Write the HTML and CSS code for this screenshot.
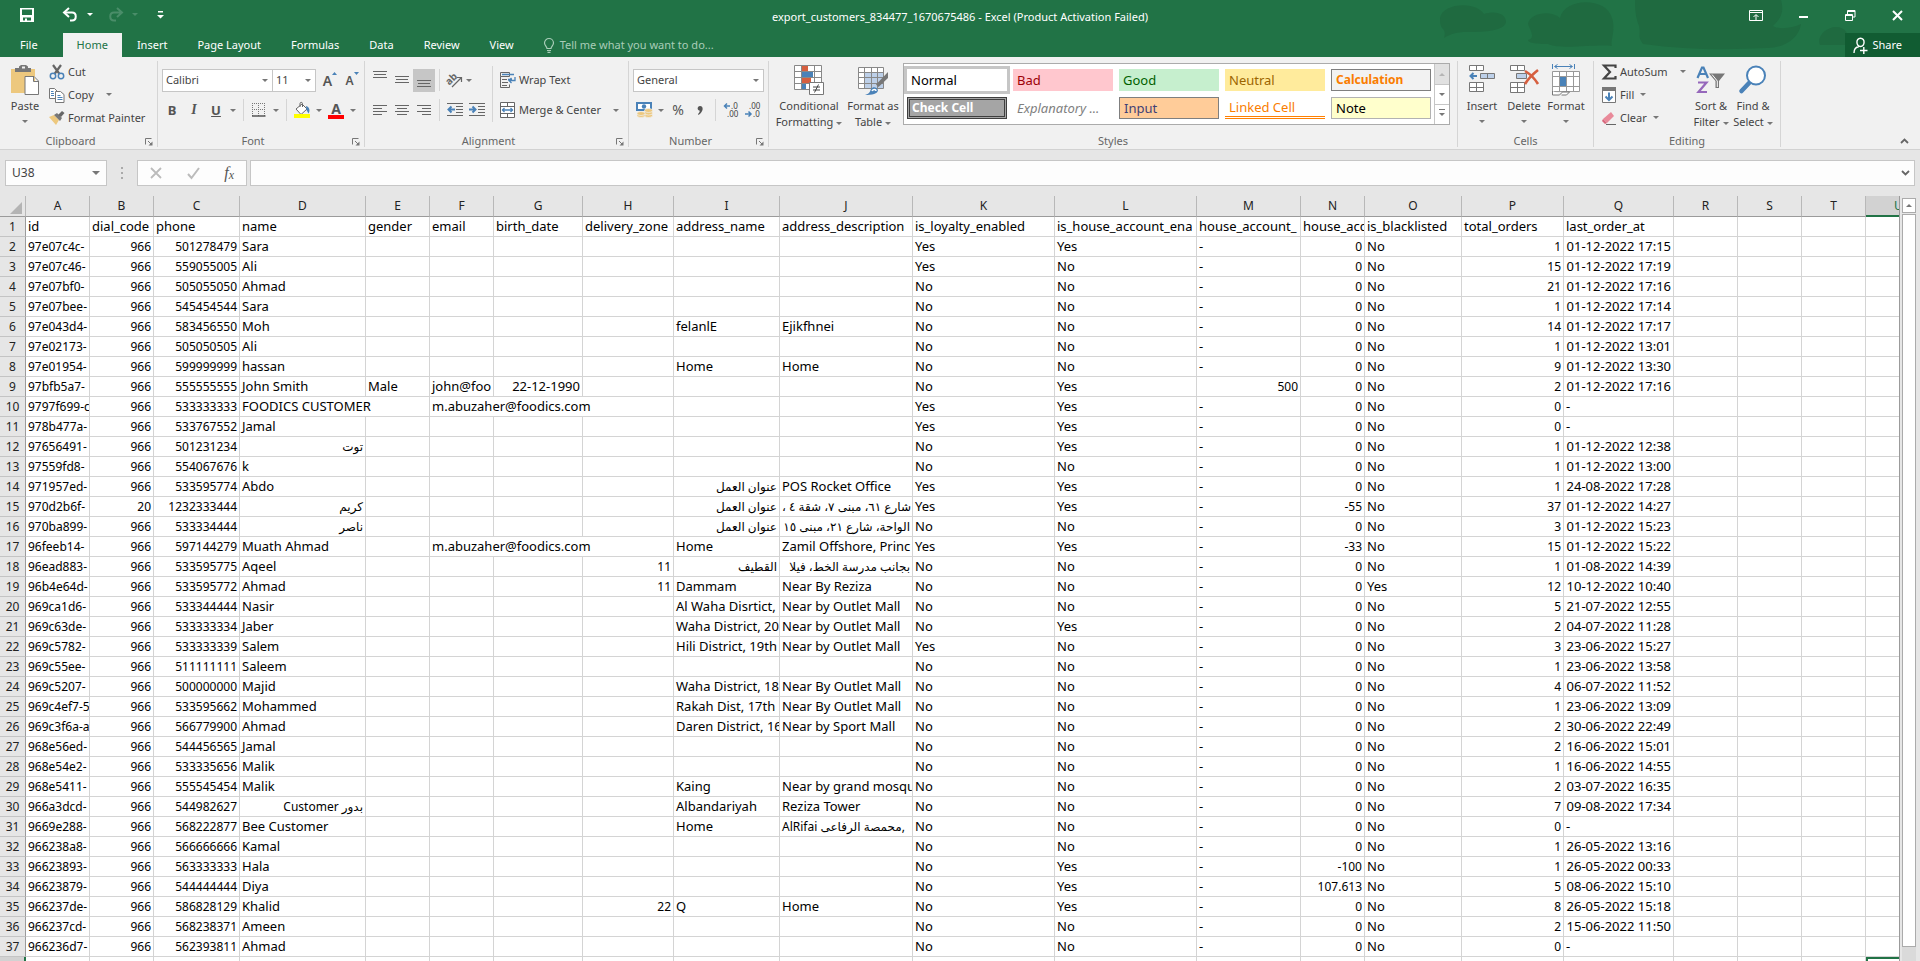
FILE: index.html
```html
<!DOCTYPE html>
<html lang="en">
<head>
<meta charset="utf-8">
<title>export_customers_834477_1670675486 - Excel</title>
<link rel="stylesheet" href="styles.css">
</head>
<body>
<header class="top">
  <svg class="clouds" width="480" height="57" viewBox="0 0 480 57" aria-hidden="true">
    <g fill="#1f6a40"><path d="M0 18C2 4 34 0 44 14c12-4 22 0 22 8-2 10-26 10-40 10-8 0-16 2-22 6 2-6 0-8-2-10-2-3-2-6-2-10z"/><path d="M88 24c2-12 24-14 32-6C124-2 166-4 172 18c4 12-2 24 0 28-16-2-52 4-64-2-16 0-20-2-20-4 8-2 2-10 0-16z"/><path d="M195 0h146c4 14-2 20-8 26 6 4 20 2 28-2-2 14-16 24-34 24-40 2-80 2-124-4-6-8-2-10-4-18-4-10-4-20-4-26z"/><path d="M380 45c-4-10 8-18 16-18 10 0 14 8 12 18z"/></g>
  </svg>
  <div class="titlebar">
    <div class="quick">
      <button class="plain save" aria-label="Save"><svg width="14" height="14" viewBox="0 0 14 14"><path fill="#fff" fill-rule="evenodd" d="M0 0h14v14H0zM2 1.500v5.500h10V1.500zM3 9.500v3h2v-2h2v2h4v-3z"/></svg></button>
      <button class="plain" aria-label="Undo"><svg width="15" height="14" viewBox="0 0 15 14"><path d="M2 4.500h7c5 0 5 8 0 8H7" fill="none" stroke="#fff" stroke-width="2"/><path d="M6 0L1 4.500 6 9" fill="none" stroke="#fff" stroke-width="2"/></svg></button>
      <span class="caret light"></span>
      <button class="plain redo" aria-label="Redo"><svg width="15" height="14" viewBox="0 0 15 14"><path d="M13 4.500H6c-5 0-5 8 0 8h2M9 0l5 4.500L9 9" fill="none" stroke="#4a8d69" stroke-width="2"/></svg></button>
      <span class="caret dim"></span>
      <button class="plain custom" aria-label="Customize toolbar"><svg width="7" height="8" viewBox="0 0 7 8"><path fill="#fff" d="M1 0h5v1.500H1zM0 4h7L3.500 7.500z"/></svg></button>
    </div>
    <h1 class="doc">export_customers_834477_1670675486 - Excel (Product Activation Failed)</h1>
    <div class="winbtns">
      <button class="plain" aria-label="Ribbon display options"><svg width="14" height="12" viewBox="0 0 14 12"><path d="M.5.500h13v10H.5zM.5 2.500h13M7 10V5M4.500 7L7 4.500 9.500 7" fill="none" stroke="#fff"/></svg></button>
      <button class="plain" aria-label="Minimize"><svg width="10" height="12" viewBox="0 0 10 12"><path fill="#fff" d="M0 6h9v2H0z"/></svg></button>
      <button class="plain" aria-label="Restore"><svg width="11" height="12" viewBox="0 0 11 12"><path d="M.5 4.500h7v6h-7zM.5 5.500h7M2.500 4V.500h7.500v6.500H8M2.500 1.500H10" fill="none" stroke="#fff"/></svg></button>
      <button class="plain" aria-label="Close"><svg width="11" height="11" viewBox="0 0 11 11"><path d="M1 1l9 9M10 1l-9 9" stroke="#fff" stroke-width="2"/></svg></button>
    </div>
  </div>
  <nav class="tabs">
    <button class="tab file">File</button><button class="tab on">Home</button><button class="tab">Insert</button><button class="tab">Page Layout</button><button class="tab">Formulas</button><button class="tab">Data</button><button class="tab">Review</button><button class="tab">View</button>
    <button class="tab tell"><svg width="10" height="15" viewBox="0 0 10 15"><path d="M3 10.500c0-2-2.500-3-2.500-5.500a4.500 4.500 0 0 1 9 0c0 2.500-2.500 3.500-2.500 5.500zM3 12.500h4M3.500 14.300h3" fill="none" stroke="#a9cdb8" stroke-width="1.200"/></svg>Tell me what you want to do...</button>
    <button class="share"><svg width="15" height="17" viewBox="0 0 15 17"><path d="M1 16c0-4 2-6 5-6.500M7.500 1.200c5 0 4.500 8.300 0 8.300s-5-8.300 0-8.300zM7 13.500h7.500M10.800 10v7" fill="none" stroke="#fff" stroke-width="1.400"/></svg>Share</button>
  </nav>
</header>

<section class="ribbon" aria-label="Home ribbon">
  <div class="group clip">
    <div class="body">
      <button class="big paste"><svg width="30" height="30" viewBox="0 0 30 30"><path fill="#edc87e" d="M1 4h24v24H1z"/><path fill="#777" d="M5 3h4V1.500L11 0h5l2 1.500V3h3v4H5z"/><path fill="#f1f1f1" d="M12 1.500h3v2h-3z"/><path d="M15 11.500h9l4.500 4.500v13.500H15zM23.500 12v4.500h5" fill="#fff" stroke="#777"/></svg><span>Paste</span><i class="caret"></i></button>
      <div class="stack">
        <button class="small"><svg width="16" height="16" viewBox="0 0 16 16"><path d="M4 1l6.500 9M12 1L5.500 10" stroke="#666" stroke-width="2.200"/><g fill="none" stroke="#4a82b8" stroke-width="1.500"><circle cx="4" cy="12" r="2.700"/><circle cx="12" cy="12" r="2.700"/></g></svg>Cut</button>
        <button class="small"><svg width="16" height="16" viewBox="0 0 16 16"><path d="M.5 1.500h5l3 3v7h-8z" fill="#fff" stroke="#777"/><path d="M6.500 4.500h5l3.500 3v8H6.500z" fill="#fff" stroke="#777"/><path d="M2 4.500h2.500M2 6.500h3M2 8.500h3M8.500 8.500h3M8.500 10.500h5M8.500 12.500h5" stroke="#4a82b8"/></svg>Copy<i class="caret far"></i></button>
        <button class="small"><svg width="16" height="16" viewBox="0 0 16 16"><path d="M0 7l5-2 5 5-3 5z" fill="#edc87e"/><path d="M5 5l3-2 5 5-2 3z" fill="#777"/><path d="M9 5l4-4 2.500 2L12 7z" fill="#666"/></svg>Format Painter</button>
      </div>
    </div>
    <div class="cap"><span>Clipboard</span><button class="plain launch" aria-label="Clipboard settings"><svg width="8" height="8" viewBox="0 0 8 8"><path d="M.5 6.500v-6h6M3 3l4 4" fill="none" stroke="#777"/><path fill="#777" d="M7.500 3.500v4h-4z"/></svg></button></div>
  </div>

  <div class="group font">
    <div class="body rows">
      <div class="row gap">
        <span class="pick face"><select aria-label="Font"><option>Calibri</option></select><i class="caret"></i></span><span class="pick size"><select aria-label="Font size"><option>11</option></select><i class="caret"></i></span>
        <button class="tool grow" aria-label="Increase font size"><b class="a1">A</b><svg width="5" height="3" viewBox="0 0 5 3"><path fill="#4a82b8" d="M0 3h5L2.500 0z"/></svg></button>
        <button class="tool grow" aria-label="Decrease font size"><b class="a2">A</b><svg width="5" height="3" viewBox="0 0 5 3"><path fill="#4a82b8" d="M0 0h5L2.500 3z"/></svg></button>
      </div>
      <div class="row edge">
        <button class="tool"><b>B</b></button><button class="tool"><em>I</em></button><button class="tool"><u>U</u></button><i class="caret slot"></i>
        <hr class="sep">
        <button class="tool" aria-label="Borders"><svg width="14" height="14" viewBox="0 0 14 14"><path d="M.5 0v13M6.500 0v13M12.500 0v13M0 .500h13M0 6.500h13" stroke="#777" stroke-dasharray="1 1"/><path d="M0 13h13.500" stroke="#555" stroke-width="1.500"/></svg></button><i class="caret slot"></i>
        <hr class="sep">
        <button class="tool" aria-label="Fill color"><svg width="16" height="16" viewBox="0 0 16 16"><path d="M2 7l6-5 5 5-6 5.500z" fill="#fff" stroke="#666"/><path d="M6 5V1.500C6 0 8.500 0 8.500 1.500V5" fill="none" stroke="#666"/><path fill="#4a82b8" d="M12 4c4 1 4 5 2.500 7.500L12.500 8z"/><path fill="#ff0" d="M0 12h16v4H0z"/></svg></button><i class="caret slot"></i>
        <button class="tool inkbtn" aria-label="Font color"><b>A</b></button><i class="caret slot"></i>
      </div>
    </div>
    <div class="cap"><span>Font</span><button class="plain launch" aria-label="Font settings"><svg width="8" height="8" viewBox="0 0 8 8"><path d="M.5 6.500v-6h6M3 3l4 4" fill="none" stroke="#777"/><path fill="#777" d="M7.500 3.500v4h-4z"/></svg></button></div>
  </div>

  <div class="group align">
    <div class="body">
      <div class="rows">
        <div class="row">
          <button class="tool lift" aria-label="Top align"><svg width="14" height="16" viewBox="0 0 14 16"><path d="M0 1.500h14M1 4.500h12M0 7.500h14" stroke="#666"/></svg></button><button class="tool" aria-label="Middle align"><svg width="14" height="16" viewBox="0 0 14 16"><path d="M0 4.500h14M1 7.500h12M0 10.500h14" stroke="#666"/></svg></button><button class="tool pressed" aria-label="Bottom align"><svg width="14" height="16" viewBox="0 0 14 16"><path d="M0 8.500h14M1 11.500h12M0 14.500h14" stroke="#666"/></svg></button>
          <hr class="sep">
          <button class="tool" aria-label="Orientation"><svg width="18" height="16" viewBox="0 0 18 16"><text x="0" y="10" font-size="10" font-weight="bold" fill="#666" transform="rotate(-45 6 8)">ab</text><path d="M6 15L15 6M11 5.500h4.500V10" fill="none" stroke="#666" stroke-width="1.200"/></svg></button><i class="caret slot near"></i>
        </div>
        <div class="row">
          <button class="tool" aria-label="Align left"><svg width="14" height="12" viewBox="0 0 14 12"><path d="M0 1.500h14M0 4.500h9M0 7.500h14M0 10.500h9" stroke="#666"/></svg></button><button class="tool" aria-label="Center"><svg width="14" height="12" viewBox="0 0 14 12"><path d="M0 1.500h14M2 4.500h10M0 7.500h14M2 10.500h10" stroke="#666"/></svg></button><button class="tool" aria-label="Align right"><svg width="14" height="12" viewBox="0 0 14 12"><path d="M0 1.500h14M5 4.500h9M0 7.500h14M5 10.500h9" stroke="#666"/></svg></button>
          <hr class="sep">
          <button class="tool" aria-label="Decrease indent"><svg width="16" height="14" viewBox="0 0 16 14"><path d="M0 .500h16M9 3.500h7M9 6.500h7M9 9.500h7M0 12.500h16" stroke="#666"/><path d="M8 6.500H2M4.500 3.500l-3 3 3 3" fill="none" stroke="#4a82b8" stroke-width="2"/></svg></button><button class="tool" aria-label="Increase indent"><svg width="16" height="14" viewBox="0 0 16 14"><path d="M0 .500h16M9 3.500h7M9 6.500h7M9 9.500h7M0 12.500h16" stroke="#666"/><path d="M0 6.500h6M3.500 3.500l3 3-3 3" fill="none" stroke="#4a82b8" stroke-width="2"/></svg></button>
        </div>
      </div>
      <hr class="sep tall">
      <div class="rows">
        <div class="row"><button class="small"><svg width="16" height="16" viewBox="0 0 16 16"><path d="M.5.500h9v4h-9zM.5 4.500v11h9v-3" fill="none" stroke="#666"/><path d="M2 7.500h5M2 10.500h6M2 13.500h5" stroke="#666"/><path d="M2 2.500h12M8 7.500h4M15 5v3.500H9M11.500 6L9 8.500l2.500 2.500" fill="none" stroke="#4a82b8" stroke-width="1.300"/></svg>Wrap Text</button></div>
        <div class="row"><button class="small"><svg width="16" height="16" viewBox="0 0 16 16"><path d="M.5.500h14v15H.5zM.5 4.500h14M.5 11.500h14M7.500 0v4.500M7.500 11.500V16" fill="#fff" stroke="#666"/><path d="M2 8h11M4.500 6L2.500 8l2 2M10.500 6l2 2-2 2" fill="none" stroke="#4a82b8" stroke-width="1.300"/></svg>Merge &amp; Center<i class="caret far"></i></button></div>
      </div>
    </div>
    <div class="cap"><span>Alignment</span><button class="plain launch" aria-label="Alignment settings"><svg width="8" height="8" viewBox="0 0 8 8"><path d="M.5 6.500v-6h6M3 3l4 4" fill="none" stroke="#777"/><path fill="#777" d="M7.500 3.500v4h-4z"/></svg></button></div>
  </div>

  <div class="group number">
    <div class="body rows">
      <div class="row"><span class="pick fmt"><select aria-label="Number format"><option>General</option></select><i class="caret"></i></span></div>
      <div class="row">
        <button class="tool" aria-label="Accounting format"><svg width="17" height="16" viewBox="0 0 17 16"><path fill="#4a82b8" d="M0 0h16v9H0z"/><path fill="#fff" d="M2 2h12v5H2z"/><circle cx="8" cy="4.500" r="2.200" fill="#4a82b8"/><g fill="#edc87e" stroke="#f1f1f1" stroke-width=".7"><ellipse cx="12.500" cy="13.500" rx="4" ry="2"/><ellipse cx="12.500" cy="11" rx="4" ry="2"/><ellipse cx="12.500" cy="8.500" rx="4" ry="2"/><ellipse cx="5" cy="13.500" rx="4" ry="2"/><ellipse cx="5" cy="11.500" rx="4" ry="2"/></g></svg></button><i class="caret slot"></i>
        <button class="tool pct">%</button><button class="tool" aria-label="Comma style"><svg width="6" height="9" viewBox="0 0 6 9"><path d="M3 0c4 0 3.500 6-1.500 9L1 8c1.500-1.500 2-2.500 1.500-3.500C0 4 0 .500 3 0z" fill="#555"/></svg></button>
        <hr class="sep">
        <button class="tool" aria-label="Increase decimal"><svg width="16" height="16" viewBox="0 0 16 16"><g font-size="8" fill="#444"><text x="8" y="7">.0</text><text x="4" y="15">.00</text></g><path d="M7 4H2M4 1.500L1.500 4 4 6.500" fill="none" stroke="#4a82b8" stroke-width="1.500"/></svg></button><button class="tool" aria-label="Decrease decimal"><svg width="16" height="16" viewBox="0 0 16 16"><g font-size="8" fill="#444"><text x="4" y="7">.00</text><text x="8" y="15">.0</text></g><path d="M0 12h6M3.500 9.500L6 12l-2.500 2.500" fill="none" stroke="#4a82b8" stroke-width="1.500"/></svg></button>
      </div>
    </div>
    <div class="cap"><span>Number</span><button class="plain launch" aria-label="Number settings"><svg width="8" height="8" viewBox="0 0 8 8"><path d="M.5 6.500v-6h6M3 3l4 4" fill="none" stroke="#777"/><path fill="#777" d="M7.500 3.500v4h-4z"/></svg></button></div>
  </div>

  <div class="group styles">
    <div class="body">
      <button class="big cf"><svg width="30" height="30" viewBox="0 0 30 30"><path d="M.5.500h27v24H.5z" fill="#fff"/><path fill="#d65f3f" d="M8 1h6v5H8zM8 13h9v5H8z"/><path fill="#4a82b8" d="M8 7h11v5H8zM8 19h4v5H8z"/><path d="M.5.500h27v24H.5zM.5 6.500h27M.5 12.500h27M.5 18.500h27M7.500.500v24M20.500.500v24" fill="none" stroke="#888"/><path d="M15.500 17.500h14v12h-14z" fill="#fff" stroke="#777"/><path d="M19 22h7M19 25h7M24.500 19.500l-4 8" stroke="#444"/></svg><span>Conditional</span><span>Formatting<i class="caret in"></i></span></button>
      <button class="big fat"><svg width="30" height="30" viewBox="0 0 30 30"><path fill="#fff" d="M.5 2.500h25v21H.5z"/><path fill="#bdd0e9" d="M7 8h18v15H7z"/><path d="M.5 2.500h25v21H.5zM.5 7.500h25M.5 12.500h25M.5 18.500h25M6.500 2.500v21M13.500 2.500v21M19.500 2.500v21" fill="none" stroke="#888"/><path d="M30 7v6L20.500 22 18 19.500z" fill="#777"/><path d="M7 30c4-1 5-3 6-6 2-3 6-2 7 1 0 4-6 5-13 5z" fill="#4a82b8"/><path d="M14 26c1-2 4-2 4 0" fill="none" stroke="#fff" stroke-width="1.500"/></svg><span>Format as</span><span>Table<i class="caret in"></i></span></button>
      <div class="gallery">
        <div class="swatches">
          <button class="sw normal">Normal</button><button class="sw bad">Bad</button><button class="sw good">Good</button><button class="sw neutral">Neutral</button><button class="sw calc">Calculation</button>
          <button class="sw check">Check Cell</button><button class="sw expl">Explanatory ...</button><button class="sw inp">Input</button><button class="sw link">Linked Cell</button><button class="sw note">Note</button>
        </div>
        <div class="scroll"><button class="off" aria-label="Previous styles"><i class="caret up"></i></button><button aria-label="Next styles"><i class="caret"></i></button><button aria-label="All styles"><i class="caret more"></i></button></div>
      </div>
    </div>
    <div class="cap"><span>Styles</span></div>
  </div>

  <div class="group cells">
    <div class="body">
      <button class="big"><svg width="28" height="30" viewBox="0 0 28 30"><path d="M1.500.500h14v5h-14zM8.500.500v5M1.500 17.500h14v9h-14zM8.500 17.500v9M1.500 22.500h14" fill="#fff" stroke="#777"/><path d="M12.500 8.500h14v5h-14zM19.500 8.500v5" fill="#bdd0e9" stroke="#777"/><path d="M9 11H3M5.500 8L2.500 11l3 3" fill="none" stroke="#4a82b8" stroke-width="2"/></svg><span>Insert</span><i class="caret"></i></button>
      <button class="big"><svg width="30" height="30" viewBox="0 0 30 30"><path d="M1.500.500h14v5h-14zM8.500.500v5M1.500 17.500h14v10h-14zM8.500 17.500v10M1.500 22.500h14" fill="#fff" stroke="#777"/><path d="M7.500 8.500h10v5h-10z" fill="#bdd0e9" stroke="#777"/><path d="M16 6c5 3 10 8 13 13M29 5c-5 4-10 9-13 14" fill="none" stroke="#d65f3f" stroke-width="2.600"/></svg><span>Delete</span><i class="caret"></i></button>
      <button class="big"><svg width="28" height="32" viewBox="0 0 28 32" class="tallicon"><path d="M.5 0v5M22.500 0v5M3 2.500h17M5.500.500l-3 2 3 2M17.500.500l3 2-3 2" fill="none" stroke="#4a82b8"/><path d="M.5 7.500h27v20H.5z" fill="#fff"/><path d="M.5 7.500h27v20H.5zM7.500 7v20M14.500 7v20M21.500 7v20M.5 12.500h27M.5 22.500h27" fill="none" stroke="#999"/><path fill="#4a82b8" d="M8 13h6v9H8z"/><path d="M.5 27v4h7l3-3h7l-3 3h-5" fill="#fff" stroke="#777"/></svg><span>Format</span><i class="caret"></i></button>
    </div>
    <div class="cap"><span>Cells</span></div>
  </div>

  <div class="group editing">
    <div class="body">
      <div class="stack">
        <button class="small"><svg width="15" height="16" viewBox="0 0 15 16"><path d="M13.500 4V1.500H2L8 8l-6 6.500h11.500V12" fill="none" stroke="#444" stroke-width="2.200"/></svg>AutoSum<i class="caret far"></i></button>
        <button class="small"><svg width="15" height="16" viewBox="0 0 15 16"><path d="M.5.500h13v15H.5z" fill="#fff" stroke="#777"/><path fill="#777" d="M0 0h14v4H0z"/><path d="M7 5.500V13M3.500 9.500L7 13l3.500-3.500" fill="none" stroke="#4a82b8" stroke-width="2"/></svg>Fill<i class="caret in"></i></button>
        <button class="small"><svg width="15" height="16" viewBox="0 0 15 16"><path d="M1 9l8-7 3 4-7 7z" fill="#e98a9a"/><path d="M1 9l4 4-2 1-3-3z" fill="#d9677c"/><path d="M4 14.500h10" stroke="#666"/></svg>Clear<i class="caret in"></i></button>
      </div>
      <button class="big"><svg width="30" height="30" viewBox="0 0 30 30"><path d="M1.500 13L6 2.500h1.500L12 13M3.500 9h6.500" fill="none" stroke="#4a82b8" stroke-width="2.200"/><path d="M2 17.500h8.500L2.500 27H11" fill="none" stroke="#9668bb" stroke-width="2.200"/><path d="M13 8.500h16L23 16v7h-3.500v-7z" fill="#777"/><path d="M16 9.500L21.300 16v6" fill="none" stroke="#fff"/></svg><span>Sort &amp;</span><span>Filter<i class="caret in"></i></span></button>
      <button class="big"><svg width="28" height="30" viewBox="0 0 28 30"><path d="M11 17L2.500 26" stroke="#4a82b8" stroke-width="4.500" stroke-linecap="round"/><circle cx="17" cy="10.500" r="9" fill="#fff" stroke="#4a82b8" stroke-width="2"/></svg><span>Find &amp;</span><span>Select<i class="caret in"></i></span></button>
    </div>
    <div class="cap"><span>Editing</span></div>
  </div>
  <button class="plain collapse" aria-label="Collapse ribbon"><svg width="9" height="6" viewBox="0 0 9 6"><path d="M1 5l3.500-3.500L8 5" fill="none" stroke="#666" stroke-width="1.800"/></svg></button>
</section>

<section class="formula">
  <div class="namebox"><input aria-label="Name box" value="U38"><i class="caret"></i></div>
  <svg class="dots" width="3" height="13" viewBox="0 0 3 13"><path d="M0 0h2v2H0zM0 5h2v2H0zM0 10h2v2H0z" fill="#aaa"/></svg>
  <div class="fx">
    <button class="plain" aria-label="Cancel"><svg width="12" height="12" viewBox="0 0 12 12"><path d="M1 1l10 10M11 1L1 11" stroke="#bbb" stroke-width="1.800"/></svg></button>
    <button class="plain" aria-label="Enter"><svg width="13" height="12" viewBox="0 0 13 12"><path d="M1 7l3.500 4L12 1" fill="none" stroke="#bbb" stroke-width="2"/></svg></button>
    <button class="plain fxb" aria-label="Insert function"><em>f</em><em class="x">x</em></button>
  </div>
  <div class="entry"><input aria-label="Formula bar"><button class="plain" aria-label="Expand formula bar"><svg width="9" height="6" viewBox="0 0 9 6"><path d="M1 1l3.500 3.500L8 1" fill="none" stroke="#666" stroke-width="1.800"/></svg></button></div>
</section>

<main class="sheet">
  <div class="view">
    <table class="grid">
      <colgroup><col class="rh"><col class="w64"><col class="w64"><col class="w86"><col class="w126"><col class="w64"><col class="w64"><col class="w89"><col class="w91"><col class="w106"><col class="w133"><col class="w142"><col class="w142"><col class="w104"><col class="w64"><col class="w97"><col class="w102"><col class="w110"><col class="w64"><col class="w64"><col class="w64"><col></colgroup>
      <thead><tr id="letters"></tr></thead>
      <tbody id="rows"></tbody>
    </table>
  </div>
  <div class="vbar"><button class="upbtn" aria-label="Scroll up"><i class="caret up"></i></button><div class="track"><div class="thumb"></div></div></div>
</main>
<script src="app.js"></script>
</body>
</html>
```
FILE: styles.css
```css
* { box-sizing: border-box; }
body { margin: 0; height: 100vh; overflow: hidden; display: flex; flex-direction: column; background: #e6e6e6; color: #444; font: 11px/16px "Noto Sans", "DejaVu Sans", sans-serif; }
button { font: inherit; color: inherit; background: none; border: 0; padding: 0; margin: 0; }
input, select { font: inherit; color: #444; border: 0; background: none; padding: 0; margin: 0; outline: 0; }
svg { display: block; flex: none; overflow: visible; }
svg text { font-family: "Noto Sans", sans-serif; }
.plain { display: flex; align-items: center; justify-content: center; }

.caret { display: inline-block; flex: none; width: 0; height: 0; border: 3px solid transparent; border-top-color: #777; border-bottom: 0; }
.caret.light { border-top-color: #fff; }
.caret.dim { border-top-color: #4a8d69; }
.caret.up { border-top: 0; border-bottom: 3px solid #777; }
.caret.slot { margin: 0 3px; }
.caret.near { margin: 0; }
.caret.in { margin-left: 3px; vertical-align: middle; }
.caret.far { margin-left: 9px; }

.top { position: relative; background: #217346; color: #fff; flex: none; }
.clouds { position: absolute; top: 0; right: 0; overflow: hidden; }
.titlebar { position: relative; display: grid; grid-template-columns: 1fr auto 1fr; height: 33px; align-items: center; }
.quick { display: flex; align-items: center; padding: 0 0 4px 20px; gap: 9px; }
.save { margin-right: 20px; }
.redo { margin-left: 6px; }
.custom { margin-left: 10px; }
.doc { font-size: 11px; font-weight: 400; margin: 0; }
.winbtns { display: flex; justify-content: flex-end; align-items: center; gap: 36px; padding: 0 17px 2px 0; }
.tabs { position: relative; display: flex; height: 24px; gap: 1px; }
.tab { padding: 0 14px; }
.tab.file { padding: 0 24px 0 20px; }
.tab.on { background: #f1f1f1; color: #217346; }
.tab.on ~ .tab { padding: 0 15px 0 14px; }
.tab.tell { display: flex; align-items: center; gap: 6px; color: #a9cdb8; }
.share { margin-left: auto; display: flex; align-items: center; gap: 4px; padding: 0 18px 0 8px; background: #115c32; }

.ribbon { flex: none; display: flex; background: #f1f1f1; padding: 4px 0 2px; border-bottom: 1px solid #d2d2d2; }
.group { flex: none; display: flex; flex-direction: column; border-right: 1px solid #d5d5d5; height: 86px; }
.body { display: flex; height: 74px; }
.cap { position: relative; display: flex; justify-content: center; line-height: 12px; color: #666; padding-right: 16px; }
.styles .cap, .cells .cap, .editing .cap { padding-right: 0; }
.launch { position: absolute; right: 4px; top: 3px; }
.clip { width: 158px; }
.font { width: 207px; }
.align { width: 264px; }
.number { width: 140px; }
.styles { width: 689px; }
.cells { width: 136px; }
.editing { width: 187px; }

.big { width: 42px; padding-top: 4px; display: flex; flex-direction: column; align-items: center; white-space: nowrap; }
.big svg { margin-bottom: 3px; }
.big > .caret { margin-top: 6px; }
.big .tallicon { margin: -1px 0 2px; }
.paste { width: 38px; margin: 0 5px 0 6px; }
.cf { width: 70px; margin-left: 5px; }
.fat { width: 58px; }
.stack { display: flex; flex-direction: column; }
.small { display: flex; align-items: center; gap: 3px; height: 23px; white-space: nowrap; }
.stack .small { line-height: 14px; padding-bottom: 2px; }
.rows { display: flex; flex-direction: column; padding-top: 4px; }
.row { display: flex; align-items: center; height: 30px; padding-left: 4px; }
.row.edge { padding-left: 3px; }
.tool { width: 22px; height: 23px; display: flex; align-items: center; justify-content: center; font-size: 13px; color: #555; }
.tool.pressed { background: #c6c6c6; }
.tool.lift { align-items: flex-start; padding-top: 1px; }
.tool em { font-family: "Liberation Serif", serif; font-size: 14px; font-weight: 700; }
.tool u { font-weight: 700; }
.tool.pct { font-size: 14px; }
.grow { align-items: flex-start; }
.grow svg { margin-top: 3px; }
.a1 { font-size: 14px; line-height: 23px; font-weight: 600; }
.a2 { font-size: 12px; line-height: 24px; font-weight: 600; }
.inkbtn b { width: 16px; height: 17px; font-size: 14px; line-height: 13px; border-bottom: 4px solid #f00; }
.sep { width: 1px; height: 22px; margin: 0 4px; border: 0; background: #d5d5d5; }
.sep.tall { height: 56px; margin: 5px 3px 0 0; }
.align .rows:first-child { width: 127px; }
.pick { position: relative; display: flex; height: 23px; border: 1px solid #c6c6c6; background: #fff; }
.pick select { appearance: none; flex: 1; padding-left: 3px; }
.pick .caret { position: absolute; right: 4px; top: 9px; }
.face { width: 111px; }
.size { width: 44px; margin-left: -1px; margin-right: 3px; }
.fmt { width: 131px; }

.gallery { display: flex; width: 547px; height: 62px; margin: 2px 0 0 1px; border: 1px solid #ababab; background: #fff; }
.swatches { flex: 1; display: grid; grid-template-columns: repeat(5, 1fr); grid-auto-rows: 22px; gap: 6px; padding: 5px 3px; }
.sw { text-align: left; padding: 0 4px; font-size: 13px; color: #000; white-space: nowrap; overflow: hidden; }
.normal { background: #fff; outline: 3px solid #c6c6c6; }
.bad { background: #ffc7ce; color: #9c0006; }
.good { background: #c6efce; color: #006100; }
.neutral { background: #ffeb9c; color: #9c6500; }
.calc { background: #f2f2f2; color: #fa7d00; border: 1px solid #7f7f7f; font-size: 12px; font-weight: 700; }
.check { background: #a5a5a5; color: #fff; border: 3px double #3f3f3f; font-size: 12px; line-height: 14px; padding: 0 2px; font-weight: 700; }
.expl { color: #7f7f7f; font-style: italic; }
.inp { background: #fc9; color: #3f3f76; border: 1px solid #7f7f7f; }
.link { color: #fa7d00; border-bottom: 3px double #ff8001; }
.note { background: #ffc; border: 1px solid #b2b2b2; }
.scroll { width: 15px; display: grid; grid-template-rows: repeat(3, 1fr); }
.scroll button { border: 0 solid #c6c6c6; border-left-width: 1px; display: flex; align-items: center; justify-content: center; }
.scroll button + button { border-top-width: 1px; }
.scroll .off { background: #e1e1e1; }
.scroll .off .caret { border-bottom-color: #b5b5b5; }
.more { position: relative; }
.more::before { content: ""; position: absolute; left: -3px; top: -7px; width: 6px; height: 1px; background: #777; }
.cells .body { padding-left: 3px; }
.editing .body { padding-left: 8px; }
.editing .stack { width: 88px; }
.collapse { margin: auto 11px 3px auto; }

.formula { flex: none; height: 46px; display: flex; align-items: center; padding: 0 5px; font-size: 12px; }
.namebox, .fx, .entry { height: 26px; display: flex; align-items: center; background: #fdfdfd; border: 1px solid #c6c6c6; }
.namebox { width: 102px; padding: 0 6px; }
.namebox input { flex: 1; min-width: 0; }
.namebox .caret { border-width: 4px 4px 0; }
.dots { margin: 0 13px 0 14px; }
.fx { width: 110px; justify-content: space-between; padding: 0 12px; margin-right: 3px; }
.fxb { font: italic 16px/20px "Liberation Serif", serif; color: #555; }
.fxb .x { font-size: 12px; padding-top: 4px; }
.entry { flex: 1; padding: 0 4px; }
.entry input { flex: 1; }

.sheet { flex: 1; min-height: 0; display: flex; }
.view { flex: 1; min-width: 0; overflow: hidden; background: #fff; border-right: 1px solid #9b9b9b; }
.grid { width: calc(100% + 32px); table-layout: fixed; border-collapse: separate; border-spacing: 0; font-size: 13px; line-height: 19px; color: #000; }
.rh { width: 26px; }
.w64 { width: 64px; }
.w86 { width: 86px; }
.w89 { width: 89px; }
.w91 { width: 91px; }
.w97 { width: 97px; }
.w102 { width: 102px; }
.w104 { width: 104px; }
.w106 { width: 106px; }
.w110 { width: 110px; }
.w126 { width: 126px; }
.w133 { width: 133px; }
.w142 { width: 142px; }
.grid th { height: 20px; padding: 0; font-weight: 400; font-size: 12px; line-height: 18px; background: #e6e6e6; color: #222; overflow: hidden; }
.grid thead th { height: 21px; border-bottom: 1px solid #9b9b9b; border-right: 1px solid #b8b8b8; }
.grid thead .sel { background: #d2d2d2; color: #217346; border-bottom: 2px solid #217346; border-right: 0; }
.grid tbody th { border-right: 1px solid #9b9b9b; border-bottom: 1px solid #c4c4c4; }
.grid tbody .sel { background: #d2d2d2; border-right: 2px solid #217346; }
.grid td { height: 20px; padding: 0 2px; border-right: 1px solid #d4d4d4; border-bottom: 1px solid #d4d4d4; white-space: nowrap; overflow: hidden; text-align: left; }
.grid td.num { text-align: right; font-size: 12px; }
.grid td.id, .grid td.mixed { font-size: 12px; }
.grid td.date { text-align: right; }
.grid td[dir="rtl"] { text-align: right; font-size: 12px; }
.grid td.cursor { border: 2px solid #217346; border-right: 0; }
.corner svg { margin: 3px 3px 0 auto; }
.vbar { flex: none; width: 20px; padding: 2px 4px 0 2px; display: flex; flex-direction: column; gap: 1px; }
.upbtn { height: 15px; background: #fff; border: 1px solid #ababab; display: flex; align-items: center; justify-content: center; }
.track { flex: 1; background: #dadada; padding-bottom: 14px; display: flex; }
.thumb { flex: 1; background: #fff; border: 1px solid #ababab; }
```
FILE: app.js
```
const headers = ["id", "dial_code", "phone", "name", "gender", "email", "birth_date", "delivery_zone", "address_name", "address_description", "is_loyalty_enabled", "is_house_account_ena", "house_account_", "house_acc", "is_blacklisted", "total_orders", "last_order_at", "", "", "", ""];

// id | phone | name | loyalty | house account | total orders | last order | zone | address name | address description
const source = `97e07c4c-|501278479|Sara|Y|Y|1|01-12-2022 17:15
97e07c46-|559055005|Ali|Y|N|15|01-12-2022 17:19
97e07bf0-|505055050|Ahmad|N|N|21|01-12-2022 17:16
97e07bee-|545454544|Sara|N|N|1|01-12-2022 17:14
97e043d4-|583456550|Moh|N|N|14|01-12-2022 17:17||felanlE|Ejikfhnei
97e02173-|505050505|Ali|N|N|1|01-12-2022 13:01
97e01954-|599999999|hassan|N|N|9|01-12-2022 13:30||Home|Home
97bfb5a7-|555555555|John Smith|N|Y|2|01-12-2022 17:16
9797f699-c|533333333|FOODICS CUSTOMER|Y|Y|0|-
978b477a-|533767552|Jamal|Y|Y|0|-
97656491-|501231234|توت|N|Y|1|01-12-2022 12:38
97559fd8-|554067676|k|N|N|1|01-12-2022 13:00
971957ed-|533595774|Abdo|Y|Y|1|24-08-2022 17:28||عنوان العمل|POS Rocket Office
970d2b6f-|1232333444|كريم|Y|Y|37|01-12-2022 14:27||عنوان العمل|شارع ٦١، مبنى ٧، شقة ٤ ،
970ba899-|533334444|ناصر|N|N|3|01-12-2022 15:23||عنوان العمل|الواحة، شارع ٢١، مبنى ١٥
96feeb14-|597144279|Muath Ahmad|Y|Y|15|01-12-2022 15:22||Home|Zamil Offshore, Princ
96ead883-|533595775|Aqeel|N|N|1|01-08-2022 14:39|11|القطيف|بجانب مدرسة الخط، فيلا
96b4e64d-|533595772|Ahmad|N|N|12|10-12-2022 10:40|11|Dammam|Near By Reziza
969ca1d6-|533344444|Nasir|N|N|5|21-07-2022 12:55||Al Waha Disrtict,|Near by Outlet Mall
969c63de-|533333334|Jaber|N|Y|2|04-07-2022 11:28||Waha District, 20|Near by Outlet Mall
969c5782-|533333339|Salem|Y|N|3|23-06-2022 15:27||Hili District, 19th|Near by Outlet Mall
969c55ee-|511111111|Saleem|N|N|1|23-06-2022 13:58
969c5207-|500000000|Majid|N|N|4|06-07-2022 11:52||Waha District, 18|Near By Outlet Mall
969c4ef7-5|533595662|Mohammed|N|N|1|23-06-2022 13:09||Rakah Dist, 17th S|Near By Outlet Mall
969c3f6a-a|566779900|Ahmad|N|N|2|30-06-2022 22:49||Daren District, 16|Near by Sport Mall
968e56ed-|544456565|Jamal|N|N|2|16-06-2022 15:01
968e54e2-|533335656|Malik|N|N|1|16-06-2022 14:55
968e5411-|555545454|Malik|N|N|2|03-07-2022 16:35||Kaing|Near by grand mosqu
966a3dcd-|544982627|بدور Customer|N|N|7|09-08-2022 17:34||Albandariyah|Reziza Tower
9669e288-|568222877|Bee Customer|N|N|0|-||Home|AlRifai محمصة الرفاعى,
966238a8-|566666666|Kamal|N|N|1|26-05-2022 13:16
96623893-|563333333|Hala|N|Y|1|26-05-2022 00:33
96623879-|544444444|Diya|N|Y|5|08-06-2022 15:10
966237de-|586828129|Khalid|N|Y|8|26-05-2022 15:18|22|Q|Home
966237cd-|568238371|Ameen|N|N|2|15-06-2022 11:50
966236d7-|562393811|Ahmad|N|N|0|-`;

const overrides = {
  9: { 4: "Male", 5: "john@foo", 6: "22-12-1990", 12: "500" },
  10: { 5: "m.abuzaher@foodics.com" },
  15: { 1: "20", 13: "-55" },
  17: { 5: "m.abuzaher@foodics.com", 13: "-33" },
  19: { 14: "Yes" },
  33: { 13: "-100" },
  34: { 13: "107.613" }
};
// Text that runs over the empty cells to its right: row -> column -> span
const spans = { 10: { 3: 2, 5: 3 }, 17: { 5: 3 } };
const yn = { Y: "Yes", N: "No" };

function cell(text, span) {
  const td = document.createElement("td");
  td.textContent = text;
  if (span) td.colSpan = span;
  if (/^\d\d-\d\d-\d{4}/.test(text)) td.className = "date";
  else if (/^-?[\d.]+$/.test(text)) td.className = "num";
  else if (/^9[0-9a-f]{7}-/.test(text)) td.className = "id";
  else if (/^[\u0600-\u06ff]/.test(text)) td.dir = "rtl";
  else if (/[\u0600-\u06ff]/.test(text)) td.className = "mixed";
  return td;
}
function heading(text, selected) {
  const th = document.createElement("th");
  th.textContent = text;
  if (selected) th.className = "sel";
  return th;
}
function addRow(n, values) {
  const tr = document.createElement("tr");
  tr.append(heading(n, n === 38));
  for (let c = 0; c < 21; c++) {
    const span = (spans[n] || {})[c];
    tr.append(cell(values[c] || "", span));
    if (span) c += span - 1;
  }
  document.getElementById("rows").append(tr);
  return tr;
}

const letters = document.getElementById("letters");
const corner = heading("");
corner.className = "corner";
corner.innerHTML = '<svg width="12" height="12" viewBox="0 0 12 12"><path d="M12 0v12H0z" fill="#b4b4b4"/></svg>';
letters.append(corner);
for (const l of "ABCDEFGHIJKLMNOPQRSTU") letters.append(heading(l, l === "U"));

addRow(1, headers);
source.split("\n").forEach((line, i) => {
  const [id, phone, name, loyal, house, total, last, zone, aname, adesc] = line.split("|");
  const v = [id, "966", phone, name, "", "", "", zone, aname, adesc, yn[loyal], yn[house], "-", "0", "No", total, last];
  addRow(i + 2, Object.assign(v, overrides[i + 2]));
});
addRow(38, []).lastChild.className = "cursor";
```
